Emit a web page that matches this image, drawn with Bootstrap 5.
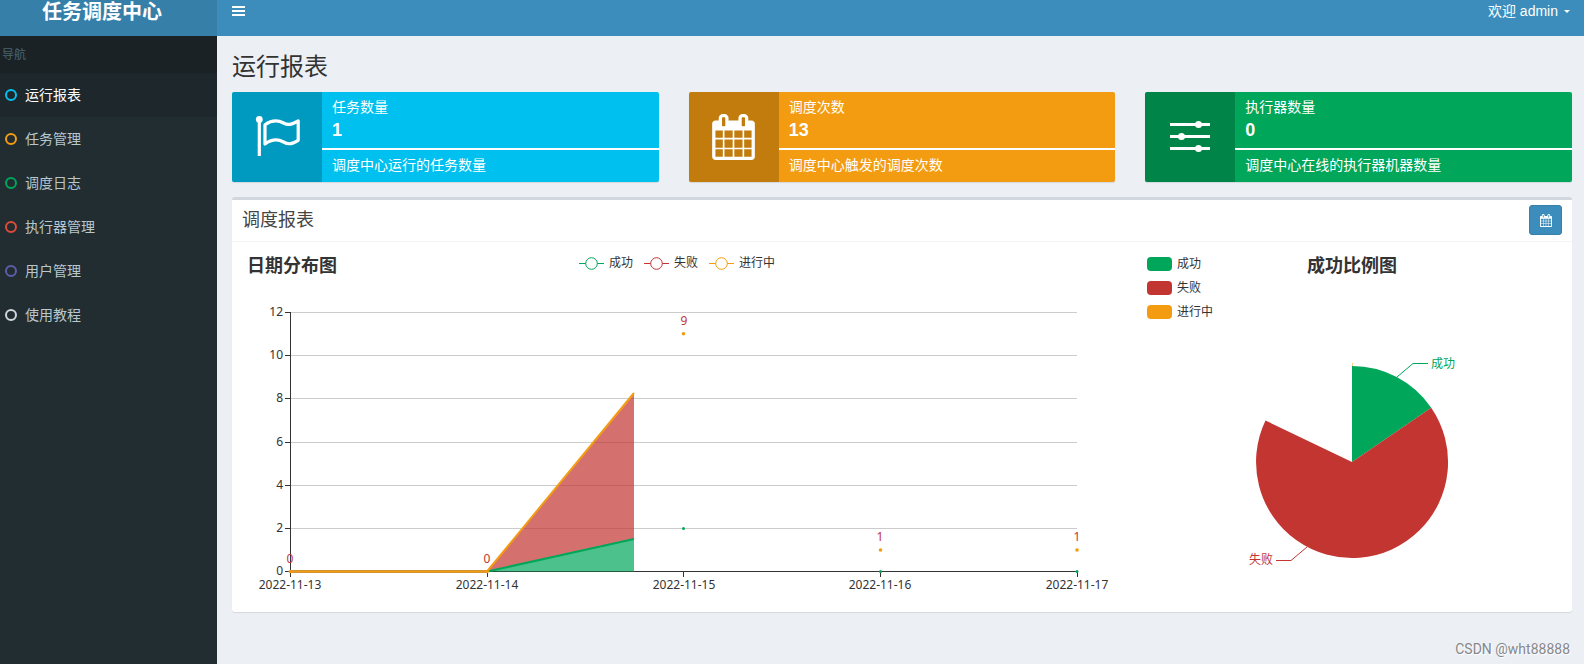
<!DOCTYPE html>
<html lang="zh-CN">
<head>
<meta charset="utf-8">
<meta name="viewport" content="width=device-width, initial-scale=1">
<title>任务调度中心</title>
<link href="https://cdn.jsdelivr.net/npm/bootstrap@5.3.0/dist/css/bootstrap.min.css" rel="stylesheet">
<style>
  body { font: 14px/20px "Liberation Sans", "Noto Sans CJK SC", sans-serif; color: #333; background: #ecf0f5; }
  .side { width: 217px; background: #222d32; }
  .brand { height: 36px; background: #367fa9; color: #fff; font-size: 20px; line-height: 24px; padding-right: 13px; }
  .brand:hover { color: #fff; }
  .topbar { height: 36px; background: #3c8dbc; padding: 0 14px 14px 15px; }
  .topbar button, .topbar a { color: #fff; line-height: 22px; }
  .topbar .dropdown-toggle::after { border-width: 3px 3px 0; margin-left: 6px; vertical-align: 3px; }
  .side-label { height: 37px; line-height: 39px; padding-left: 2px; font-size: 12px; color: #4b646f; background: #1a2226; }
  .side .nav-link { height: 44px; padding: 0 5px; gap: 8px; color: #b8c7ce; }
  .side .nav-link.active { background: #1e282c; color: #fff; }
  .ring { width: 12px; height: 12px; border: 2px solid; border-radius: 50%; }
  .c-aqua { color: #00c0ef; } .c-yellow { color: #f39c12; } .c-green { color: #00a65a; }
  .c-red { color: #dd4b39; } .c-purple { color: #605ca8; } .c-gray { color: #d2d6de; }
  .page { padding: 17px 12px 5px 15px; }
  .page h1 { font-size: 24px; font-weight: 400; line-height: 28px; margin-bottom: 11px; }
  .row { --bs-gutter-x: 30px; }
  .stat { color: #fff; border-radius: 2px; overflow: hidden; box-shadow: 0 1px 1px rgba(0,0,0,.1); margin-bottom: 15px; }
  .stat-icon { width: 90px; height: 90px; background: rgba(0,0,0,.2); }
  .stat-text { padding: 5px 10px 7px; }
  .stat-num { font-size: 18px; line-height: 27px; }
  .stat-rule { height: 2px; background: #fff; margin: 4px -10px 5px; }
  .bg-aqua { background: #00c0ef; } .bg-yellow { background: #f39c12; } .bg-green { background: #00a65a; } .bg-brick { background: #c23531; }
  .panel { background: #fff; border-top: 3px solid #d2d6de; border-radius: 3px; box-shadow: 0 1px 1px rgba(0,0,0,.1); }
  .panel-head { padding: 5px 10px 6px; border-bottom: 1px solid #f4f4f4; }
  .panel-head h2 { font-size: 18px; font-weight: 400; line-height: 20px; color: #444; }
  .btn-range { width: 33px; height: 30px; padding: 0; color: #fff; background: #3c8dbc; border: 1px solid #367fa9; border-radius: 3px; }
  .panel-body { padding: 10px; }
  .chart-head { display: grid; grid-template-columns: 1fr auto 1fr; padding: 0 5px; font-size: 12px; line-height: 14px; }
  .chart-head h3 { font-size: 18px; font-weight: 700; line-height: 28px; margin: 0; }
  .head-line { height: 40px; }
  .head-pie { height: 70px; }
  .legend-row { gap: 11px; padding-top: 4px; }
  .legend-col { gap: 10px; padding-top: 5px; }
  .swatch { width: 25px; height: 14px; border-radius: 4px; margin-right: 1px; }
  .chart { display: block; width: 100%; height: auto; font: 12px "Noto Sans", "Noto Sans CJK SC", sans-serif; fill: #333; }
  .credit { padding: 27px 2px 0 0; font-family: Roboto, sans-serif; color: #85888d; text-shadow: 1px 1px 0 #fff; }
</style>
</head>
<body>
<div class="d-flex min-vh-100">
  <aside class="side flex-shrink-0">
    <a href="#" class="brand d-block text-center text-decoration-none fw-bold">任务调度中心</a>
    <div class="side-label">导航</div>
    <nav>
      <ul class="nav flex-column">
        <li><a href="#" class="nav-link active d-flex align-items-center"><span class="ring c-aqua"></span>运行报表</a></li>
        <li><a href="#" class="nav-link d-flex align-items-center"><span class="ring c-yellow"></span>任务管理</a></li>
        <li><a href="#" class="nav-link d-flex align-items-center"><span class="ring c-green"></span>调度日志</a></li>
        <li><a href="#" class="nav-link d-flex align-items-center"><span class="ring c-red"></span>执行器管理</a></li>
        <li><a href="#" class="nav-link d-flex align-items-center"><span class="ring c-purple"></span>用户管理</a></li>
        <li><a href="#" class="nav-link d-flex align-items-center"><span class="ring c-gray"></span>使用教程</a></li>
      </ul>
    </nav>
  </aside>

  <div class="flex-grow-1">
    <header class="topbar d-flex justify-content-between">
      <button type="button" class="border-0 bg-transparent p-0 d-flex align-items-center" aria-label="切换导航">
        <svg width="13" height="10" fill="#fff"><path d="M0 0h13v2H0zM0 4h13v2H0zM0 8h13v2H0z"/></svg>
      </button>
      <a href="#" class="dropdown-toggle text-decoration-none" data-bs-toggle="dropdown">欢迎 admin</a>
    </header>

    <main class="page">
      <h1>运行报表</h1>

      <div class="row">
        <div class="col-4">
          <div class="stat bg-aqua d-flex">
            <div class="stat-icon d-flex align-items-center justify-content-center">
              <svg width="46" height="42" viewBox="-1 1 46 42"><circle cx="4.3" cy="4.5" r="3.4" fill="#fff"/><path d="M4.3 4v37" stroke="#fff" stroke-width="3.2"/><path d="M10 9.7C17 4.800 23 5 28.500 8C34 11 37 9 43.200 6V25.300C37 29 34 30 28.500 27C23 24 17 24 10 29Z" fill="none" stroke="#fff" stroke-width="3.2" stroke-linejoin="round"/></svg>
            </div>
            <div class="stat-text flex-grow-1">
              <div>任务数量</div><div class="stat-num fw-bold">1</div>
              <div class="stat-rule"></div><div>调度中心运行的任务数量</div>
            </div>
          </div>
        </div>
        <div class="col-4">
          <div class="stat bg-yellow d-flex">
            <div class="stat-icon d-flex align-items-center justify-content-center">
              <svg width="43" height="46" viewBox="0 0 1664 1792" fill="#fff"><path id="cal" d="M128 1664h288v-288h-288v288zm352 0h320v-288h-320v288zm-352-352h288v-320h-288v320zm352 0h320v-320h-320v320zm-352-384h288v-288h-288v288zm736 736h320v-288h-320v288zm-384-736h320v-288h-320v288zm768 736h288v-288h-288v288zm-384-352h320v-320h-320v320zm-352-864v-288q0-13-9.500-22.500t-22.500-9.500h-64q-13 0-22.500 9.500t-9.500 22.500v288q0 13 9.500 22.500t22.500 9.500h64q13 0 22.500-9.500t9.500-22.500zm736 864h288v-320h-288v320zm-384-384h320v-288h-320v288zm384 0h288v-288h-288v288zm32-480v-288q0-13-9.500-22.500t-22.500-9.500h-64q-13 0-22.500 9.500t-9.500 22.500v288q0 13 9.500 22.500t22.500 9.500h64q13 0 22.500-9.500t9.500-22.500zm384-64v1280q0 52-38 90t-90 38h-1408q-52 0-90-38t-38-90v-1280q0-52 38-90t90-38h128v-96q0-66 47-113t113-47h64q66 0 113 47t47 113v96h384v-96q0-66 47-113t113-47h64q66 0 113 47t47 113v96h128q52 0 90 38t38 90z"/></svg>
            </div>
            <div class="stat-text flex-grow-1">
              <div>调度次数</div><div class="stat-num fw-bold">13</div>
              <div class="stat-rule"></div><div>调度中心触发的调度次数</div>
            </div>
          </div>
        </div>
        <div class="col-4">
          <div class="stat bg-green d-flex">
            <div class="stat-icon d-flex align-items-center justify-content-center">
              <svg width="40" height="32" viewBox="0 0 40 32" fill="#fff"><path d="M0 2h40v3H0zM0 14h40v3H0zM0 26h40v3H0z"/><circle cx="28.500" cy="3.500" r="3.500"/><circle cx="11.500" cy="15.500" r="3.500"/><circle cx="28.500" cy="27.500" r="3.500"/></svg>
            </div>
            <div class="stat-text flex-grow-1">
              <div>执行器数量</div><div class="stat-num fw-bold">0</div>
              <div class="stat-rule"></div><div>调度中心在线的执行器机器数量</div>
            </div>
          </div>
        </div>
      </div>

      <section class="panel">
        <div class="panel-head d-flex align-items-center justify-content-between">
          <h2 class="m-0">调度报表</h2>
          <button type="button" class="btn btn-range d-flex align-items-center justify-content-center" aria-label="选择日期范围">
            <svg width="12" height="13" viewBox="0 0 1664 1792" fill="#fff"><use href="#cal"/></svg>
          </button>
        </div>
        <div class="panel-body">
          <div class="row">
            <div class="col-8">
              <div class="chart-head head-line">
                <h3>日期分布图</h3>
                <div class="legend-row d-flex">
                  <span class="d-flex gap-1"><svg width="26" height="14" fill="#fff" stroke="#00a65a"><path d="M0 7.500h25"/><circle cx="12.500" cy="7.500" r="5.800"/></svg>成功</span>
                  <span class="d-flex gap-1"><svg width="26" height="14" fill="#fff" stroke="#c23531"><path d="M0 7.500h25"/><circle cx="12.500" cy="7.500" r="5.800"/></svg>失败</span>
                  <span class="d-flex gap-1"><svg width="26" height="14" fill="#fff" stroke="#f39c12"><path d="M0 7.500h25"/><circle cx="12.500" cy="7.500" r="5.800"/></svg>进行中</span>
                </div>
              </div>
              <svg class="chart" viewBox="0 0 870 310" role="img" aria-label="日期分布图">
                <path d="M48 20.500H835M48 63.500H835M48 106.500H835M48 150.500H835M48 193.500H835M48 236.500H835" stroke="#ccc"/>
                <path d="M43 20.500h5M43 63.500h5M43 106.500h5M43 150.500h5M43 193.500h5M43 236.500h5M43 279.500H835M48.500 20V285M245.500 280v5M441.500 280v5M638.500 280v5M835.500 280v5" stroke="#333"/>
                <path d="M245 279.500L392 247V279.500Z" fill="#00a65a" fill-opacity=".7"/>
                <path d="M245 279.500L392 102V247Z" fill="#c23531" fill-opacity=".7"/>
                <path d="M245 279.500L392 247" stroke="#00a65a" stroke-width="2"/>
                <path d="M48 279.500H245" stroke="#b08a50" stroke-width="3"/>
                <path d="M48 279.500H245L392 101" fill="none" stroke="#f39c12" stroke-width="2"/>
                <g fill="#f39c12"><circle cx="48.500" cy="279.500" r="1.800"/><circle cx="245" cy="279.500" r="1.800"/><circle cx="441.500" cy="41.700" r="1.800"/><circle cx="638.500" cy="258" r="1.800"/><circle cx="835" cy="258" r="1.800"/></g>
                <g fill="#00a65a"><circle cx="441.500" cy="236.500" r="1.500"/><circle cx="638.500" cy="279.500" r="1.500"/><circle cx="835" cy="279.500" r="1.500"/></g>
                <g text-anchor="end"><text x="41" y="24">12</text><text x="41" y="67">10</text><text x="41" y="110">8</text><text x="41" y="154">6</text><text x="41" y="197">4</text><text x="41" y="240">2</text><text x="41" y="283">0</text></g>
                <g text-anchor="middle"><text x="48" y="297">2022-11-13</text><text x="245" y="297">2022-11-14</text><text x="442" y="297">2022-11-15</text><text x="638" y="297">2022-11-16</text><text x="835" y="297">2022-11-17</text></g>
                <g text-anchor="middle" fill="#c23531"><text x="48" y="271">0</text><text x="245" y="271">0</text><text x="442" y="33">9</text><text x="638" y="249">1</text><text x="835" y="249">1</text></g>
              </svg>
            </div>
            <div class="col-4">
              <div class="chart-head head-pie">
                <div class="legend-col d-flex flex-column">
                  <span class="d-flex gap-1"><i class="swatch bg-green"></i>成功</span>
                  <span class="d-flex gap-1"><i class="swatch bg-brick"></i>失败</span>
                  <span class="d-flex gap-1"><i class="swatch bg-yellow"></i>进行中</span>
                </div>
                <h3>成功比例图</h3>
              </div>
              <svg class="chart" viewBox="0 0 420 280" role="img" aria-label="成功比例图">
                <path d="M210 140V44A96 96 0 0 1 289.200 85.700Z" fill="#00a65a"/>
                <path d="M210 140L289.200 85.700A96 96 0 1 1 123.500 98.500Z" fill="#c23531"/>
                <path d="M210.500 41v3" stroke="#f39c12" stroke-opacity=".5"/>
                <path d="M255 55L271 41.500h15" fill="none" stroke="#00a65a"/>
                <path d="M165 225L149 238.500h-15" fill="none" stroke="#c23531"/>
                <text x="289" y="46" fill="#00a65a">成功</text>
                <text x="131" y="242" text-anchor="end" fill="#c23531">失败</text>
              </svg>
            </div>
          </div>
        </div>
      </section>
      <footer class="credit text-end">CSDN @wht88888</footer>
    </main>
  </div>
</div>
<script src="https://cdn.jsdelivr.net/npm/bootstrap@5.3.0/dist/js/bootstrap.bundle.min.js"></script>
</body>
</html>
